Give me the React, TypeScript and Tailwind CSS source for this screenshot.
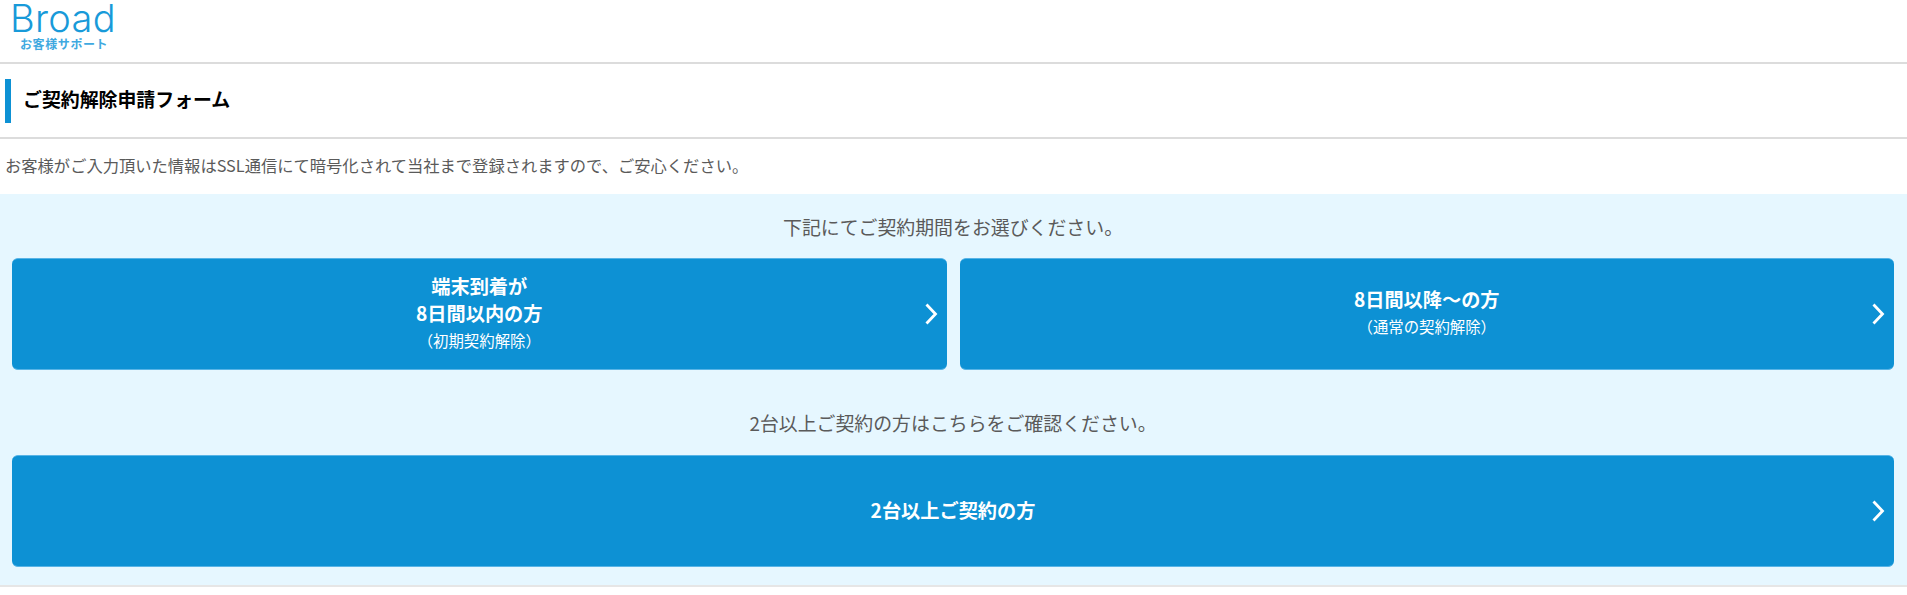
const font = { fontFamily: '"Noto Sans CJK JP", "Noto Sans", sans-serif' }

function Chevron() {
  return (
    <svg className="absolute right-[9px] top-1/2 -translate-y-1/2" width="14" height="22" viewBox="0 0 14 22" fill="none">
      <path d="M2.5 1.5 L11.5 11 L2.5 20.5" stroke="#fff" strokeWidth="2.8" />
    </svg>
  )
}

function CardButton({ lines, sub }: { lines: string[]; sub?: string }) {
  return (
    <a className="relative flex h-[112px] flex-col items-center justify-center rounded-md border-b border-t border-[#58b4e6] bg-[#0d91d4] pb-[2px] text-white">
      {lines.map((line) => (
        <span key={line} className="text-[19.2px] font-bold leading-[27px]">{line}</span>
      ))}
      {sub && <span className="text-[15.4px] leading-[27px]">{sub}</span>}
      <Chevron />
    </a>
  )
}

export default function App() {
  return (
    <div className="min-h-[595px] bg-white text-[#5a5a5a]" style={font}>
      <header className="h-[64px] border-b-2 border-[#dcdcdc] pl-[10px]">
        <div className="pt-[1px] text-[38px] font-light leading-[35px] tracking-[0.3px] text-[#189ad9]" style={{ fontFamily: 'Inter, sans-serif' }}>Broad</div>
        <div className="pl-[10px] text-[12px] font-bold leading-[16px] tracking-[0.6px] text-[#3fa9e0]">お客様サポート</div>
      </header>
      <div className="flex h-[75px] items-center border-b-2 border-[#dcdcdc] pl-[5px]">
        <h1 className="flex h-[44px] items-center border-l-[6px] border-[#0d91d4] pb-[2px] pl-[12px] text-[18.9px] font-bold text-black">ご契約解除申請フォーム</h1>
      </div>
      <p className="flex h-[55px] items-center pb-[2px] pl-[5px] text-[16.3px]">お客様がご入力頂いた情報はSSL通信にて暗号化されて当社まで登録されますので、ご安心ください。</p>
      <section className="h-[393px] border-b-2 border-[#e6e6e6] bg-[#e6f7ff] pl-[12px] pr-[13px]">
        <p className="pt-[19px] text-center text-[18.9px] leading-[27px]">下記にてご契約期間をお選びください。</p>
        <div className="mt-[18px] grid grid-cols-2 gap-[13px]">
          <CardButton lines={["端末到着が", "8日間以内の方"]} sub="（初期契約解除）" />
          <CardButton lines={["8日間以降～の方"]} sub="（通常の契約解除）" />
        </div>
        <p className="mt-[39px] text-center text-[18.9px] leading-[27px]">2台以上ご契約の方はこちらをご確認ください。</p>
        <div className="mt-[19px]">
          <CardButton lines={["2台以上ご契約の方"]} />
        </div>
      </section>
    </div>
  )
}
